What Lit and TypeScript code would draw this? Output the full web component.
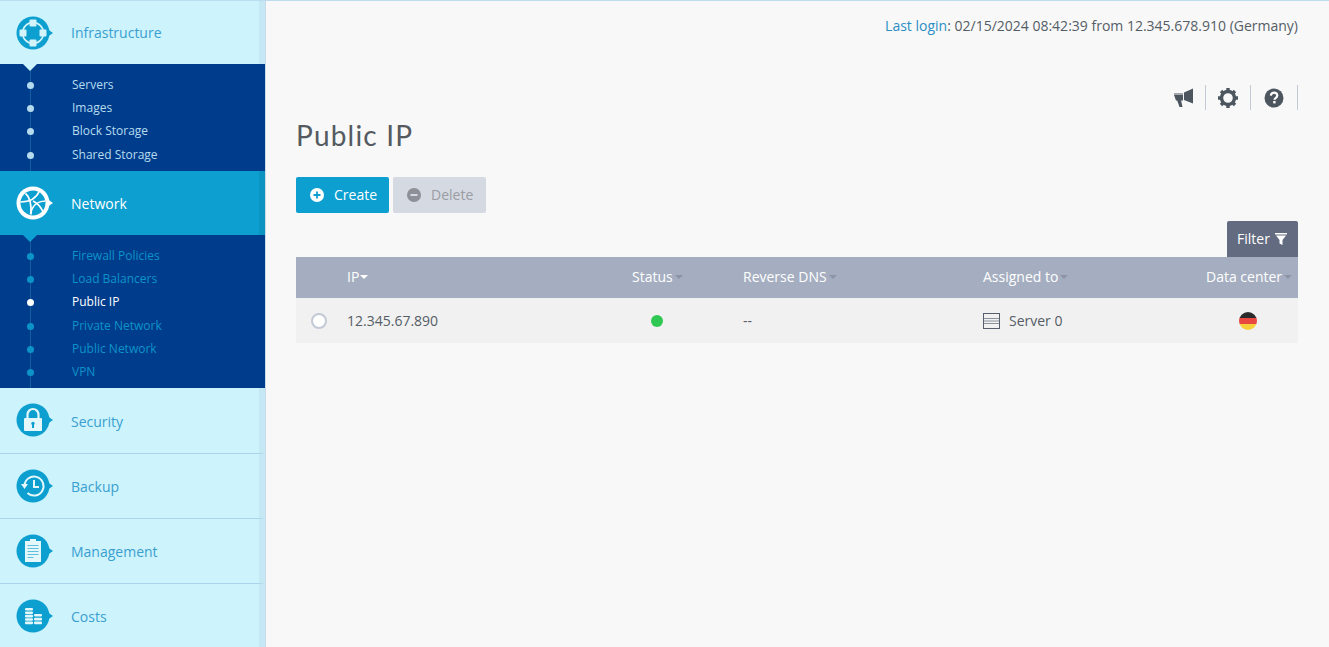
import { LitElement, html, css, svg } from "lit";
import { customElement } from "lit/decorators.js";

function bubble(kind: string, active: boolean) {
  const bg = active ? "#ffffff" : "#0c9fcf";
  const fg = active ? "#0c9fcf" : "#ffffff";
  let inner: any = "";
  if (kind === "infra") {
    inner = svg`<circle cx="17" cy="17" r="10.5" fill="none" stroke="#d4f4fb" stroke-width="1.6"/>
      <rect x="13.500" y="3.500" width="7" height="7" rx="1" fill="#d4f4fb"/>
      <rect x="13.500" y="23.500" width="7" height="7" rx="1" fill="#d4f4fb"/>
      <rect x="3.500" y="13.500" width="7" height="7" rx="1" fill="#d4f4fb"/>
      <rect x="23.500" y="13.500" width="7" height="7" rx="1" fill="#d4f4fb"/>`;
  } else if (kind === "net") {
    inner = svg`<circle cx="17" cy="17" r="12.500" fill="${fg}"/>
      <g fill="none" stroke="#fff" stroke-width="1.700">
      <path d="M9.500 7.500c4 3 6 9 5.500 21"/><path d="M4.500 16c6 0 15-2 19-11"/><path d="M29.500 15c-6 0-13 3-15 13"/><path d="M17 15c4 2 8 6 10 11"/></g>`;
  } else if (kind === "lock") {
    inner = svg`<path d="M11.500 15v-3.500a5.500 5.500 0 0 1 11 0V15" fill="none" stroke="#e4f8fc" stroke-width="2.200"/>
      <rect x="8" y="15" width="18" height="13" rx="1" fill="#e4f8fc"/>
      <circle cx="17" cy="20.500" r="1.700" fill="${bg}"/><rect x="16" y="21" width="2" height="4" fill="${bg}"/>`;
  } else if (kind === "backup") {
    inner = svg`<path d="M8.500 17a9.500 9.500 0 1 1 3 7" fill="none" stroke="#e4f8fc" stroke-width="2"/>
      <path d="M5 15h7l-3.500 5z" fill="#e4f8fc"/>
      <path d="M18 11v7h5" fill="none" stroke="#e4f8fc" stroke-width="2"/>`;
  } else if (kind === "clip") {
    inner = svg`<rect x="9" y="7" width="16" height="21" fill="#e4f8fc"/>
      <rect x="14" y="5" width="6" height="3" fill="#e4f8fc"/>
      <g stroke="#5fbfdf" stroke-width="1"><path d="M11.500 11.500h11M11.500 14.500h11M11.500 17.500h11M11.500 20.500h11"/><path d="M11.500 23.500h6"/></g>`;
  } else {
    inner = svg`<g fill="#e4f8fc"><rect x="9" y="9" width="8" height="2.600" rx="1"/><rect x="9" y="12.400" width="8" height="2.600" rx="1"/><rect x="9" y="15.800" width="8" height="2.600" rx="1"/><rect x="9" y="19.200" width="8" height="2.600" rx="1"/><rect x="9" y="22.600" width="8" height="2.600" rx="1"/>
      <rect x="18" y="15" width="8" height="2.600" rx="1"/><rect x="18" y="18.800" width="8" height="2.600" rx="1"/><rect x="18" y="22.600" width="8" height="2.600" rx="1"/></g>`;
  }
  return html`<svg class="bubble" width="38" height="34" viewBox="0 0 38 34">
    <circle cx="17" cy="17" r="16.500" fill="${bg}"/>
    <path d="M32 13.500l5 3.500-5 3.500z" fill="${bg}"/>
    ${inner}
  </svg>`;
}

interface Group { label: string; icon: string; items?: string[]; active?: boolean; }

const groups: Group[] = [
  { label: "Infrastructure", icon: "infra", items: ["Servers", "Images", "Block Storage", "Shared Storage"] },
  { label: "Network", icon: "net", active: true, items: ["Firewall Policies", "Load Balancers", "Public IP", "Private Network", "Public Network", "VPN"] },
  { label: "Security", icon: "lock" },
  { label: "Backup", icon: "backup" },
  { label: "Management", icon: "clip" },
  { label: "Costs", icon: "costs" },
];

@customElement("app-root")
export class AppRoot extends LitElement {
  static styles = css`
    :host { display: flex; width: 1329px; height: 647px; overflow: hidden; background: #f8f8f8;
      font-family: "Open Sans", sans-serif; font-size: 14px; color: #555d66; border-top: 1px solid #bcdcf0; box-sizing: border-box; }
    .side { width: 265px; flex: none; background: #cdf3fc; border-right: 1px solid #c9dbe6; }
    .head { height: 63px; display: flex; align-items: center; gap: 17px; padding-left: 16px; color: #3a9fd0;
      border-right: 6px solid #c6e8f4; position: relative; }
    .head.plain { height: 64px; border-bottom: 1px solid #a9d3ea; }
    .head.plain .label { padding-top: 2px; }
    .head.plain.tall { height: 65px; }
    .head.active { background: #0c9fcf; color: #fff; border-right-color: #0b93c2; height: 64px; }
    .head.active .label { padding-top: 2px; }
    .head.open::after { content: ""; position: absolute; left: 23px; bottom: -7px; border: 7px solid transparent; border-bottom: 0; border-top-color: #cdf3fc; z-index: 1; }
    .head.active.open::after { border-top-color: #0c9fcf; }
    .bubble { flex: none; display: block; }
    .sub { background: #003c8c; list-style: none; margin: 0; padding: 9px 0 4.800px; position: relative; }
    .sub.first { padding-bottom: 5.200px; }
    .sub::before { content: ""; position: absolute; left: 30px; top: 0; bottom: 0; width: 1px; background: #125f9e; }
    .sub li { height: 23.200px; display: flex; align-items: center; font-size: 12px; padding-left: 72px; position: relative; color: #0c93c8; }
    .sub li::before { content: ""; position: absolute; left: 27px; top: 9px; width: 7px; height: 7px; border-radius: 50%; background: #0c93c8; }
    .sub.light li { color: #b5dcee; }
    .sub.light li::before { background: #b5dcee; }
    .sub li.cur { color: #fff; }
    .sub li.cur::before { background: #fff; }
    .main { flex: 1; padding: 16px 31px 0 30px; min-width: 0; display: flex; flex-direction: column; }
    .login { text-align: right; height: 18px; line-height: 18px; color: #555d66; font-size: 14px; }
    .login a { color: #2b8fc4; }
    .tools { display: flex; justify-content: flex-end; margin-top: 50px; height: 25px; }
    .tool { width: 44px; height: 25px; display: flex; align-items: center; justify-content: center; border-right: 1px solid #c3cad6; }
    .tool.last { width: 46px; }
    h1 { font-family: "Lato", sans-serif; font-weight: 400; font-size: 28px; line-height: 34px; margin: 8px 0 0; color: #555a60; letter-spacing: 1.200px; }
    .btns { display: flex; gap: 4px; margin-top: 25px; }
    .btn { height: 36px; width: 93px; box-sizing: border-box; display: flex; align-items: center; gap: 10px; padding: 0 0 1px 14px; border-radius: 2px; background: #0c9fcf; color: #fff; }
    .btn.off { background: #d5d9e2; color: #9a9da3; }
    .btn svg { margin-top: 1px; }
    .filter-row { display: flex; justify-content: flex-end; margin-top: 8px; }
    .filter { width: 71px; height: 36px; background: #626b7f; color: #fff; border-radius: 2px 2px 0 0; display: flex; align-items: center; gap: 5px; padding: 0 0 1px 10px; box-sizing: border-box; }
    .row { display: grid; grid-template-columns: 51px 285px 111px 240px 223px 92px; align-items: center; }
    .thead { height: 41px; background: #a5aec0; color: #fff; padding-bottom: 2px; box-sizing: border-box; }
    .tbody { height: 45px; background: #f1f1f1; color: #555d66; }
    .caret { display: inline-block; width: 0; height: 0; border: 4px solid transparent; border-bottom: 0; border-top: 4px solid #8b93a5; margin-left: 2px; vertical-align: 3px; }
    .caret.on { border-top-color: #fff; margin-left: 1px; }
    .radio { width: 12px; height: 12px; margin-left: 15px; border: 2px solid #c3cad6; border-radius: 50%; background: #fff; }
    .dot { width: 12px; height: 12px; border-radius: 50%; background: #2fc852; margin-left: 19px; }
    .srv { display: flex; align-items: center; gap: 9px; }
    .flag { width: 18px; height: 18px; border-radius: 50%; margin-left: 33px; background: linear-gradient(#2a2a2a 0 33%, #e8483f 33% 66%, #f6d13c 66%); }
  `;

  render() {
    return html`
      <aside class="side">
        ${groups.map((g, i) => html`
          <div class="head ${g.active ? "active" : ""} ${g.items ? "open" : "plain"} ${g.icon === "lock" ? "tall" : ""}">
            ${bubble(g.icon, !!g.active)}<span class="label">${g.label}</span>
          </div>
          ${g.items ? html`<ul class="sub ${i === 0 ? "first light" : ""}">
            ${g.items.map((it) => html`<li class="${it === "Public IP" ? "cur" : ""}">${it}</li>`)}
          </ul>` : ""}
        `)}
      </aside>
      <main class="main">
        <div class="login"><a>Last login</a>: 02/15/2024 08:42:39 from 12.345.678.910 (Germany)</div>
        <div class="tools">
          <div class="tool"><svg width="21" height="20" viewBox="0 0 21 20">
            <path d="M1 5h9v2H1z" fill="#a3a7ab"/>
            <path d="M1 7h9v5.500H3z" fill="#4d565f"/>
            <path d="M11 4.500L20 0.500V15.500L11 12z" fill="#4d565f"/>
            <path d="M4 12h4l1.500 7H6.500z" fill="#4d565f"/></svg></div>
          <div class="tool"><svg width="20" height="20" viewBox="0 0 20 20">
            <circle cx="10" cy="10" r="6.500" fill="none" stroke="#4d565f" stroke-width="3.400"/>
            <g stroke="#4d565f" stroke-width="3.400"><path d="M10 0v3M10 17v3M0 10h3M17 10h3M3 3l2 2M15 15l2 2M17 3l-2 2M5 15l-2 2"/></g></svg></div>
          <div class="tool last"><svg width="20" height="20" viewBox="0 0 20 20"><circle cx="10" cy="10" r="9.500" fill="#4d565f"/>
            <path d="M6.800 7.600c.3-1.900 1.600-2.900 3.300-2.900 1.800 0 3.200 1.100 3.200 2.700 0 2.400-2.800 2.300-2.800 4.400" fill="none" stroke="#fff" stroke-width="2.200"/><rect x="9.200" y="13" width="2.400" height="2.400" fill="#fff"/></svg></div>
        </div>
        <h1>Public IP</h1>
        <div class="btns">
          <div class="btn"><svg width="14" height="14" viewBox="0 0 14 14"><circle cx="7" cy="7" r="7" fill="#fff"/><path d="M7 3.500v7M3.500 7h7" stroke="#0c9fcf" stroke-width="1.800"/></svg>Create</div>
          <div class="btn off"><svg width="14" height="14" viewBox="0 0 14 14"><circle cx="7" cy="7" r="7" fill="#8d9096"/><path d="M3.500 7h7" stroke="#d5d9e2" stroke-width="2"/></svg>Delete</div>
        </div>
        <div class="filter-row"><div class="filter">Filter
          <svg width="12" height="12" viewBox="0 0 12 12" fill="#fff"><path d="M0 0h12v1.500H0zM1 2.500h10L7.500 7v5l-3-1.500V7z"/></svg></div></div>
        <div class="row thead">
          <span></span>
          <span>IP<i class="caret on"></i></span>
          <span>Status<i class="caret"></i></span>
          <span>Reverse DNS<i class="caret"></i></span>
          <span>Assigned to<i class="caret"></i></span>
          <span>Data center<i class="caret"></i></span>
        </div>
        <div class="row tbody">
          <div class="radio"></div>
          <span>12.345.67.890</span>
          <div><div class="dot"></div></div>
          <span>--</span>
          <div class="srv"><svg width="17" height="16" viewBox="0 0 17 16"><rect x=".5" y=".5" width="16" height="15" fill="#f1f1f1" stroke="#55606c"/><path d="M1 5.500h15M1 8h15M1 10.500h15" stroke="#8a929c"/></svg>Server 0</div>
          <div><div class="flag"></div></div>
        </div>
      </main>
    `;
  }
}
